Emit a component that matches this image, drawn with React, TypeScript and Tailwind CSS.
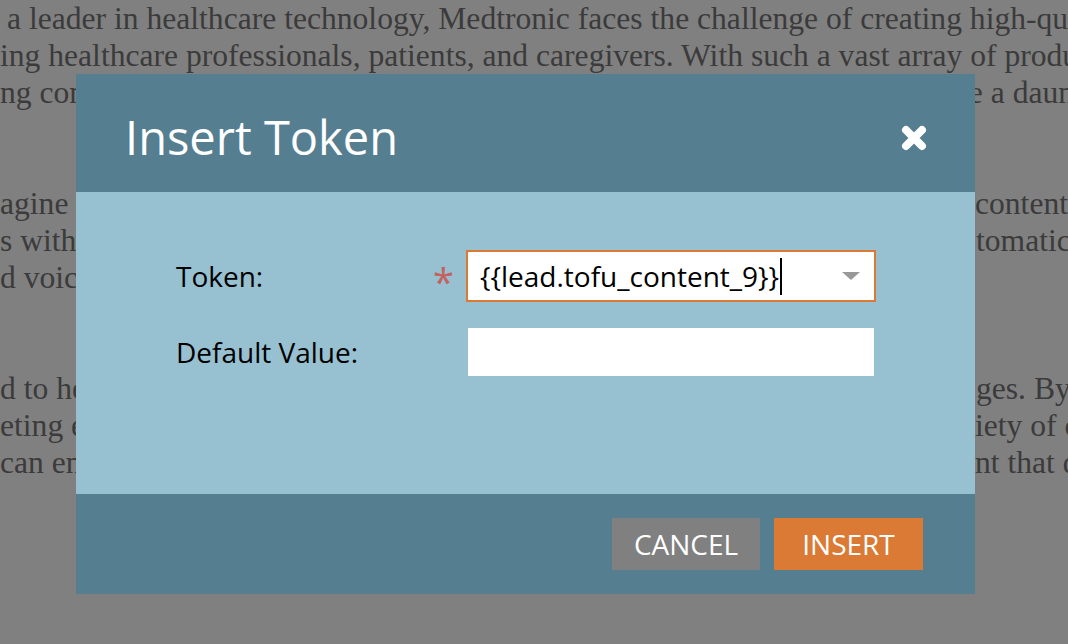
const serif = { fontFamily: '"Liberation Serif", "Times New Roman", serif' };

const BackgroundPage = () => (
  <div
    className="h-[644px] w-[1068px] overflow-hidden bg-[#808080] text-[31.6px] leading-[37px] text-[#3b3b3b]"
    style={serif}
  >
    <div className="whitespace-nowrap">
      <div className="pl-[7px]">a leader in healthcare technology, Medtronic faces the challenge of creating high-quality</div>
      <div>ing healthcare professionals, patients, and caregivers. With such a vast array of products</div>
      <div className="flex">
        <span className="w-[953px] shrink-0">ng content for every audience and channel can</span>
        <span>be a daunting</span>
      </div>
    </div>
    <div className="mt-[74px] whitespace-nowrap">
      <div className="flex">
        <span className="w-[975px] shrink-0">agine if</span>
        <span>content</span>
      </div>
      <div className="flex">
        <span className="w-[976px] shrink-0">s with</span>
        <span>tomatic</span>
      </div>
      <div>d voice</div>
    </div>
    <div className="mt-[74px] whitespace-nowrap">
      <div className="flex">
        <span className="w-[976px] shrink-0">d to help</span>
        <span>ges. By</span>
      </div>
      <div className="flex">
        <span className="w-[975px] shrink-0">eting efforts</span>
        <span>iety of content</span>
      </div>
      <div className="flex">
        <span className="w-[975px] shrink-0">can engage</span>
        <span>nt that drives</span>
      </div>
    </div>
  </div>
);

const CloseIcon = () => (
  <svg width="30" height="30" viewBox="0 0 30 30" fill="none">
    <path
      d="M7 7 L23 23 M23 7 L7 23"
      stroke="white"
      strokeWidth="8"
      strokeLinecap="round"
    />
  </svg>
);

const InsertTokenDialog = () => {
  return (
    <div
      className="absolute left-[76px] top-[74px] flex w-[899px] flex-col"
      style={{ fontFamily: '"Open Sans", "Noto Sans", sans-serif' }}
    >
      <div className="flex h-[118px] items-center justify-between bg-[#557e90] pl-[49px] pr-[46px]">
        <h1 className="pt-[8px] text-[47px] leading-none text-white">Insert Token</h1>
        <button className="mt-[9px]">
          <CloseIcon />
        </button>
      </div>

      <div className="flex h-[302px] flex-col gap-[26px] bg-[#97c0d0] pl-[100px] pt-[58px] text-[28px] text-black">
        <div className="flex items-center">
          <label className="w-[250px]">Token:</label>
          <span className="flex w-[40px] justify-end pr-[12px] pt-[10px] text-[38px] leading-none text-[#c4615d]">
            *
          </span>
          <div className="flex h-[52px] w-[410px] items-center justify-between border-2 border-[#da7a35] bg-white pl-[12px] pr-[14px]">
            <span className="flex items-center leading-none">
              {"{{lead.tofu_content_9}}"}
              <span className="ml-[1px] h-[37px] w-[2px] bg-black" />
            </span>
            <svg width="18" height="8" viewBox="0 0 18 8">
              <path d="M0 0 H18 L9 8 Z" fill="#999999" />
            </svg>
          </div>
        </div>
        <div className="flex items-center">
          <label className="w-[292px]">Default Value:</label>
          <input className="h-[48px] w-[406px] bg-white outline-none" />
        </div>
      </div>

      <div className="flex h-[100px] items-center justify-end gap-[14px] bg-[#557e90] pr-[52px] text-[28px] text-white">
        <button className="h-[52px] w-[148px] bg-[#808080]">CANCEL</button>
        <button className="h-[52px] w-[149px] bg-[#da7a35]">INSERT</button>
      </div>
    </div>
  );
};

export default function App() {
  return (
    <div className="relative h-[644px] w-[1068px] overflow-hidden">
      <BackgroundPage />
      <InsertTokenDialog />
    </div>
  );
}
